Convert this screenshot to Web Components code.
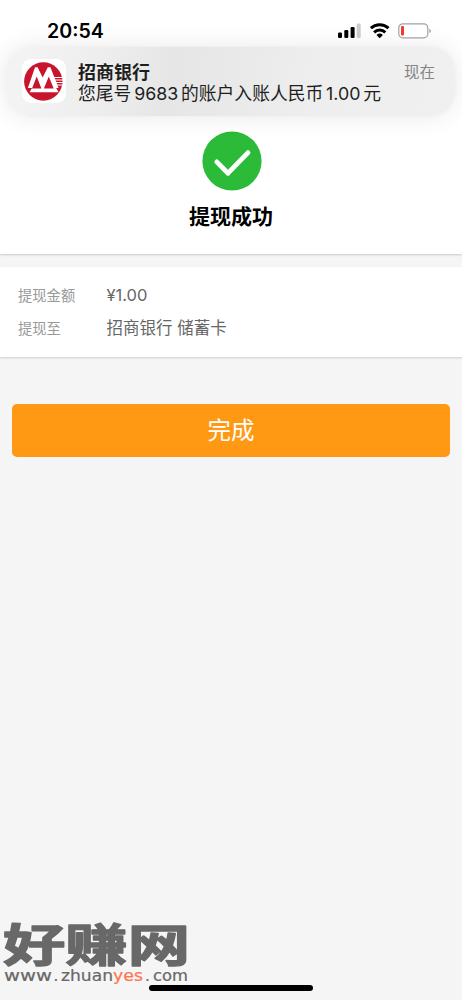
<!DOCTYPE html>
<html lang="zh-CN">
<head>
<meta charset="utf-8">
<meta name="viewport" content="width=device-width, initial-scale=1">
<title>提现成功</title>
<style>
    html, body {
        margin: 0;
        height: 100%;
        overflow: hidden;
        background: #f5f5f5;
        font-family: Inter, "Noto Sans CJK SC", sans-serif;
    }
</style>
</head>
<body>
<withdraw-page>
    <status-bar slot="status">20:54</status-bar>
    <bank-notice slot="notice">
        <span slot="title">招商银行</span>
        <span slot="time">现在</span>
        您尾号<b>9683</b>的账户入账人民币<b>1.00</b>元
    </bank-notice>
    <result-panel>提现成功</result-panel>
    <detail-list>
        <detail-row label="提现金额">¥1.00</detail-row>
        <detail-row label="提现至">招商银行 储蓄卡</detail-row>
    </detail-list>
    <done-button>完成</done-button>
    <site-mark slot="overlay"></site-mark>
    <home-bar slot="overlay"></home-bar>
</withdraw-page>

<script>
class BaseElement extends HTMLElement {
    constructor() {
        super();
        this.attachShadow({ mode: "open" });
    }
    connectedCallback() {
        const template = document.createElement('template');
        template.innerHTML = `<style>${this.getStyles()}</style>${this.getTemplate()}`;
        this.shadowRoot.appendChild(template.content.cloneNode(true));
    }
}

class WithdrawPage extends BaseElement {
    getTemplate() {
        return `
            <header>
                <slot name="status"></slot>
                <slot name="notice"></slot>
            </header>
            <main><slot></slot></main>
            <slot name="overlay"></slot>
        `;
    }
    getStyles() {
        return `
            :host {
                display: block;
                position: relative;
                height: 1000px;
                overflow: hidden;
            }
            header {
                position: absolute;
                z-index: 1;
                top: 0;
                left: 0;
                right: 0;
            }
            main {
                display: flex;
                flex-direction: column;
            }
        `;
    }
}

class StatusBar extends BaseElement {
    getTemplate() {
        return `
            <div class="time"><slot></slot></div>
            <svg width="96" height="20" viewBox="0 0 96 20">
                <rect x="1" y="11.5" width="4" height="5.5" rx="1.2"/>
                <rect x="7.3" y="9" width="4" height="8" rx="1.2"/>
                <rect x="13.6" y="6" width="4" height="11" rx="1.2"/>
                <rect x="19.7" y="2.6" width="4" height="14.4" rx="1.2" fill="#cbcbcb"/>
                <g fill="none" stroke="#000" stroke-width="3">
                    <path d="M33.9 7.2a13 13 0 0 1 17.6 0"/>
                    <path d="M37.1 11.3a8.2 8.2 0 0 1 11.2 0"/>
                </g>
                <path d="M42.7 17.2l-3.2-3.3a4.8 4.8 0 0 1 6.4 0z"/>
                <rect x="61.8" y="2.8" width="29" height="14" rx="4" fill="#fff" stroke="#a2a2a2" stroke-width="1.2"/>
                <rect x="64" y="5" width="3" height="9.6" rx="1" fill="#ed3b32"/>
                <path d="M92.3 7.7c2 .8 2 3.5 0 4.3z" fill="#999"/>
            </svg>
        `;
    }
    getStyles() {
        return `
            :host {
                display: flex;
                justify-content: space-between;
                box-sizing: border-box;
                height: 47px;
                padding: 21px 29px 0 47px;
                color: #000;
            }
            .time {
                font-size: 19.6px;
                line-height: 20px;
                font-weight: 600;
            }
        `;
    }
}

class BankLogo extends BaseElement {
    getTemplate() {
        return `
            <svg width="39" height="39" viewBox="0 0 39 39">
                <circle cx="19.3" cy="19.5" r="19.2" fill="#c8152d"/>
                <path fill="#fff" d="M11 5.2h2.6L18.7 15.5 23.8 5.2h2.6L34.6 26h-2.4l2.4 4.2H5.6L8 26H3.9z"/>
                <path fill="#c8152d" d="M12.7 14.6L17.4 26.4H8zM24.8 14.6l4.9 11.8H19.9z"/>
                <path stroke="#fff" stroke-width="1" d="M30 15.5h8M31 18h8M32 20.5h7M33 23h5"/>
            </svg>
        `;
    }
    getStyles() {
        return `
            :host {
                display: grid;
                place-items: center;
                width: 44px;
                height: 44px;
                border-radius: 9px;
                background: #fff;
            }
            svg {
                margin-right: 1px;
            }
        `;
    }
}

class BankNotice extends BaseElement {
    getTemplate() {
        return `
            <bank-logo></bank-logo>
            <div class="content">
                <div class="head">
                    <slot name="title"></slot>
                    <slot name="time"></slot>
                </div>
                <div class="body"><slot></slot></div>
            </div>
        `;
    }
    getStyles() {
        return `
            :host {
                display: flex;
                gap: 12px;
                box-sizing: border-box;
                height: 69px;
                margin: 0 7px 0 6px;
                padding: 12px 20px 0 16px;
                border-radius: 24px;
                background: linear-gradient(100deg, #f3f3f3 5%, #ededed 23%, #e6e6e6 37%, #e9e9e9 50%, #eeeeee 68%, #f0f0f0);
                box-shadow: 0 0 3px rgba(0, 0, 0, .04), 0 0 26px rgba(0, 0, 0, .09);
                color: #1e1e1e;
            }
            .content {
                flex: 1;
                padding-top: 3px;
            }
            .head {
                display: flex;
                justify-content: space-between;
                line-height: 21px;
            }
            ::slotted([slot=title]) {
                font-size: 18px;
                font-weight: 600;
            }
            ::slotted([slot=time]) {
                font-size: 15.5px;
                color: #858585;
            }
            .body {
                font-size: 17.8px;
                line-height: 21px;
                white-space: nowrap;
            }
            ::slotted(b) {
                margin: 0 2.8px;
                font-weight: 400;
            }
        `;
    }
}

class ResultPanel extends BaseElement {
    getTemplate() {
        return `
            <svg width="60" height="60" viewBox="0 0 60 60">
                <circle cx="30" cy="30" r="29.6" fill="#2bbb38"/>
                <path d="M14.8 30.9L26 42.2l20-20.6" fill="none" stroke="#fff" stroke-width="4.8" stroke-linecap="round" stroke-linejoin="round"/>
            </svg>
            <div><slot></slot></div>
        `;
    }
    getStyles() {
        return `
            :host {
                display: flex;
                flex-direction: column;
                align-items: center;
                gap: 11px;
                box-sizing: border-box;
                height: 254px;
                padding-top: 131px;
                background: #fff;
                box-shadow: 0 1px 2px rgba(0, 0, 0, .18);
            }
            svg {
                margin-left: 2px;
            }
            div {
                font-size: 21px;
                line-height: 30px;
                font-weight: 700;
                color: #000;
            }
        `;
    }
}

class DetailList extends BaseElement {
    getTemplate() {
        return `<slot></slot>`;
    }
    getStyles() {
        return `
            :host {
                display: flex;
                flex-direction: column;
                box-sizing: border-box;
                height: 90px;
                margin-top: 13px;
                padding: 12px 18px;
                background: #fff;
                box-shadow: 0 1px 2px rgba(0, 0, 0, .16);
            }
        `;
    }
}

class DetailRow extends BaseElement {
    getTemplate() {
        return `
            <span class="label">${this.getAttribute('label')}</span>
            <span class="value"><slot></slot></span>
        `;
    }
    getStyles() {
        return `
            :host {
                display: grid;
                grid-template-columns: 88.5px 1fr;
                line-height: 33px;
            }
            .label {
                font-size: 14.3px;
                color: #999;
            }
            .value {
                font-size: 16.5px;
                color: #666;
            }
        `;
    }
}

class DoneButton extends BaseElement {
    getTemplate() {
        return `<button><slot></slot></button>`;
    }
    getStyles() {
        return `
            :host {
                display: flex;
                margin: 47px 12px 0;
            }
            button {
                flex: 1;
                height: 53px;
                padding: 0 0 3px;
                border: 0;
                border-radius: 5px;
                background: #ff9914;
                color: #fff;
                font: 23.5px/50px "Noto Sans CJK SC", sans-serif;
            }
        `;
    }
}

class SiteMark extends BaseElement {
    getTemplate() {
        return `
            <svg width="200" height="100" viewBox="0 0 200 100">
                <text class="name" x="3" y="62" textLength="187" lengthAdjust="spacingAndGlyphs">好赚网</text>
                <g class="url">
                    <text x="4" y="81" textLength="48" lengthAdjust="spacingAndGlyphs">www</text>
                    <text x="53.5" y="81">.</text>
                    <text x="61" y="81" textLength="52" lengthAdjust="spacingAndGlyphs">zhuan</text>
                    <text class="accent" x="113" y="81" textLength="30" lengthAdjust="spacingAndGlyphs">yes</text>
                    <text x="145" y="81">.</text>
                    <text x="153" y="81" textLength="35" lengthAdjust="spacingAndGlyphs">com</text>
                </g>
            </svg>
        `;
    }
    getStyles() {
        return `
            :host {
                display: block;
                position: absolute;
                left: 0;
                bottom: 0;
                height: 100px;
            }
            text {
                fill: #686868;
                stroke: #686868;
                stroke-linejoin: round;
            }
            .name {
                font: 700 46px "Noto Sans CJK SC", sans-serif;
                font-size: 45px;
                stroke-width: 1.4px;
            }
            .url {
                font: 15px "DejaVu Sans", sans-serif;
                stroke-width: .2px;
            }
            .accent {
                fill: #ff7550;
                stroke: #ff7550;
            }
        `;
    }
}

class HomeBar extends BaseElement {
    getTemplate() {
        return ``;
    }
    getStyles() {
        return `
            :host {
                display: block;
                position: absolute;
                left: 149px;
                bottom: 9px;
                width: 164px;
                height: 6px;
                border-radius: 3px;
                background: #000;
            }
        `;
    }
}

customElements.define("withdraw-page", WithdrawPage);
customElements.define("status-bar", StatusBar);
customElements.define("bank-logo", BankLogo);
customElements.define("bank-notice", BankNotice);
customElements.define("result-panel", ResultPanel);
customElements.define("detail-list", DetailList);
customElements.define("detail-row", DetailRow);
customElements.define("done-button", DoneButton);
customElements.define("site-mark", SiteMark);
customElements.define("home-bar", HomeBar);
</script>
</body>
</html>
